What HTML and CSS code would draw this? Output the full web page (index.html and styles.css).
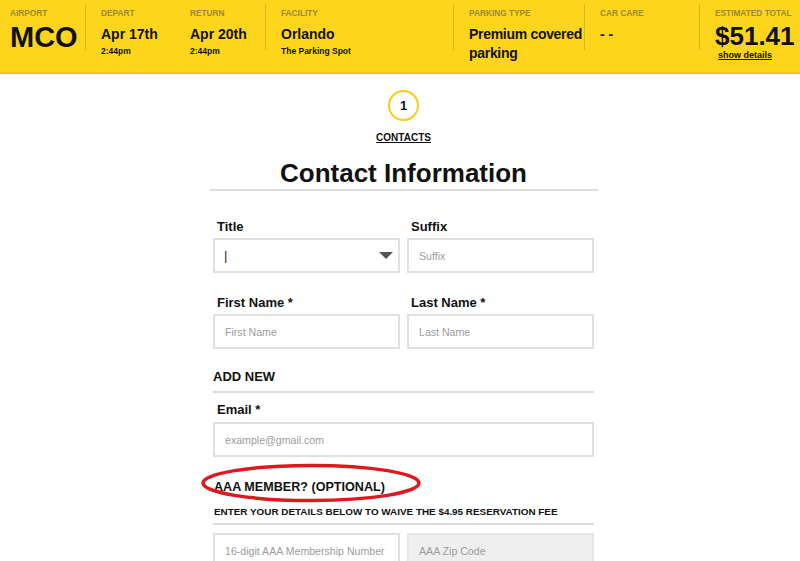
FILE: index.html
```html
<!DOCTYPE html>
<html lang="en">
<head>
<meta charset="utf-8">
<title>Contact Information</title>
<link rel="stylesheet" href="styles.css">
</head>
<body>
<header class="summary">
  <div class="grp grp-airport">
    <div class="lbl">AIRPORT</div>
    <div class="big">MCO</div>
  </div>
  <div class="grp grp-dates">
    <div class="sub sub-depart">
      <div class="lbl">DEPART</div>
      <div class="val">Apr 17th</div>
      <div class="small">2:44pm</div>
    </div>
    <div class="sub">
      <div class="lbl">RETURN</div>
      <div class="val">Apr 20th</div>
      <div class="small">2:44pm</div>
    </div>
  </div>
  <div class="grp grp-facility">
    <div class="lbl">FACILITY</div>
    <div class="val">Orlando</div>
    <div class="small">The Parking Spot</div>
  </div>
  <div class="grp grp-parking">
    <div class="lbl">PARKING TYPE</div>
    <div class="val val-tight">Premium covered parking</div>
  </div>
  <div class="grp grp-care">
    <div class="lbl">CAR CARE</div>
    <div class="val">- -</div>
  </div>
  <div class="grp grp-total">
    <div class="lbl">ESTIMATED TOTAL</div>
    <div class="total">$51.41</div>
    <div class="details">show details</div>
  </div>
</header>

<main class="page">
  <div class="col">
    <div class="step"><span>1</span></div>
    <div class="step-name">CONTACTS</div>
    <h1 class="title">Contact Information</h1>
    <form class="form">
      <div class="row">
        <div class="field">
          <label class="flabel">Title</label>
          <div class="select">
            <span class="caret">|</span>
            <svg class="arrow" width="14" height="7" viewBox="0 0 14 7"><path d="M0 0 H14 L7 7 Z" fill="#555"/></svg>
          </div>
        </div>
        <div class="field">
          <label class="flabel">Suffix</label>
          <input class="input" placeholder="Suffix">
        </div>
      </div>
      <div class="row row-gap">
        <div class="field">
          <label class="flabel">First Name *</label>
          <input class="input" placeholder="First Name">
        </div>
        <div class="field">
          <label class="flabel">Last Name *</label>
          <input class="input" placeholder="Last Name">
        </div>
      </div>
      <div class="section-head">ADD NEW</div>
      <div class="field field-email">
        <label class="flabel">Email *</label>
        <input class="input" placeholder="example@gmail.com">
      </div>
      <div class="aaa-title">AAA MEMBER? (OPTIONAL)
        <svg class="ring" width="222" height="42" viewBox="0 0 222 42"><ellipse cx="111" cy="21" rx="108" ry="17.5" fill="none" stroke="#e2161d" stroke-width="3.5"/></svg>
      </div>
      <div class="aaa-sub">ENTER YOUR DETAILS BELOW TO WAIVE THE $4.95 RESERVATION FEE</div>
      <div class="row row-aaa">
        <div class="field">
          <input class="input" placeholder="16-digit AAA Membership Number">
        </div>
        <div class="field">
          <input class="input input-disabled" placeholder="AAA Zip Code">
        </div>
      </div>
    </form>
  </div>
</main>
</body>
</html>
```
FILE: styles.css
```css
html, body {
  margin: 0;
  padding: 0;
  background: #fff;
}
body {
  font-family: "Liberation Sans", Arial, sans-serif;
  color: #111;
  overflow: hidden;
}

/* ---------- summary bar ---------- */
.summary {
  display: flex;
  height: 64px;
  padding-top: 8px;
  background: #fdd51c;
  border-bottom: 2px solid #ebc417;
}
.grp {
  position: relative;
  box-sizing: border-box;
  padding-left: 16px;
}
.grp + .grp::before {
  content: "";
  position: absolute;
  left: 0;
  top: -4px;
  width: 1px;
  height: 46px;
  background: #d8b61e;
}
.grp-airport { width: 85px; padding-left: 10px; }
.grp-dates { width: 180px; display: flex; }
.sub-depart { width: 89px; }
.grp-facility { width: 188px; }
.grp-parking { width: 131px; }
.grp-care { width: 115px; }
.grp-total { flex: 1; }

.lbl {
  font-size: 8.3px;
  line-height: 10px;
  font-weight: bold;
  color: #9a8832;
}
.big {
  margin-top: 4px;
  font-size: 29px;
  line-height: 30px;
  font-weight: bold;
}
.val {
  margin-top: 7px;
  font-size: 14px;
  line-height: 19px;
  font-weight: bold;
}
.val-tight { letter-spacing: -0.3px; }
.small {
  font-size: 8.5px;
  line-height: 14px;
  font-weight: bold;
}
.total {
  margin-top: 5px;
  font-size: 26px;
  line-height: 26px;
  font-weight: bold;
}
.details {
  margin-top: 2px;
  margin-left: 3px;
  font-size: 9px;
  line-height: 8px;
  font-weight: bold;
  text-decoration: underline;
}

/* ---------- page ---------- */
.page {
  padding-left: 7px;
}
.col {
  width: 388px;
  margin: 0 auto;
  display: flex;
  flex-direction: column;
  align-items: center;
}
.step {
  margin-top: 16px;
  width: 31px;
  height: 31px;
  box-sizing: border-box;
  border: 2px solid #f7cd16;
  border-radius: 50%;
  display: flex;
  align-items: center;
  justify-content: center;
  font-size: 13px;
  font-weight: bold;
}
.step-name {
  margin-top: 11px;
  font-size: 10px;
  line-height: 12px;
  font-weight: bold;
  text-decoration: underline;
}
.title {
  width: 100%;
  margin: 14px 0 0;
  padding-bottom: 1px;
  border-bottom: 2px solid #dddddd;
  font-size: 26px;
  line-height: 30px;
  font-weight: bold;
  text-align: center;
}

/* ---------- form ---------- */
.form {
  width: 381px;
  margin-top: 28px;
}
.row {
  display: flex;
  gap: 7px;
}
.row-gap { margin-top: 22px; }
.field {
  flex: 1;
  display: flex;
  flex-direction: column;
  min-width: 0;
}
.flabel {
  padding-left: 4px;
  margin-bottom: 3px;
  font-size: 13px;
  line-height: 16px;
  font-weight: bold;
}
.input, .select {
  box-sizing: border-box;
  height: 35px;
  width: 100%;
  margin: 0;
  border: 2px solid #e0e0e0;
  border-radius: 0;
  padding: 0 6px 0 10px;
  background: #fff;
  font-family: "Liberation Sans", Arial, sans-serif;
  font-size: 10.6px;
  color: #333;
  outline: none;
}
.input::placeholder { color: #9c9c9c; }
.input-disabled { background: #efefef; border-color: #e6e6e6; }
.select {
  display: flex;
  align-items: center;
  justify-content: space-between;
  padding: 0 5px 0 9px;
}
.caret {
  font-size: 13px;
  color: #222;
}
.section-head {
  margin-top: 20px;
  padding-bottom: 6px;
  border-bottom: 2px solid #dddddd;
  font-size: 13px;
  line-height: 16px;
  font-weight: bold;
}
.field-email { margin-top: 9px; }
.field-email .flabel { margin-bottom: 4px; }
.aaa-title {
  position: relative;
  margin-top: 22px;
  padding-left: 1px;
  font-size: 12.6px;
  line-height: 16px;
  font-weight: bold;
}
.ring {
  position: absolute;
  left: -13px;
  top: -17px;
}
.aaa-sub {
  margin-top: 11px;
  padding-left: 1px;
  padding-bottom: 5px;
  border-bottom: 2px solid #dddddd;
  font-size: 9.9px;
  line-height: 12px;
  font-weight: bold;
}
.row-aaa { margin-top: 8px; }
```
